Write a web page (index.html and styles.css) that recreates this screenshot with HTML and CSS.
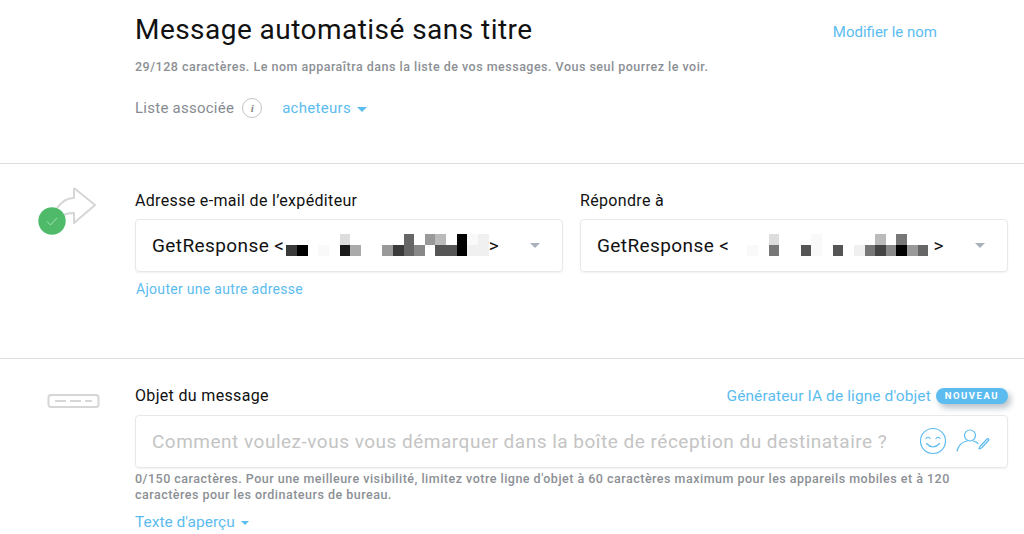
FILE: index.html
```html
<!DOCTYPE html>
<html lang="fr">
<head>
    <meta charset="UTF-8">
    <meta name="viewport" content="width=device-width, initial-scale=1.0">
    <title>Message automatisé</title>
    <link rel="stylesheet" href="styles.css">
</head>
<body>
    <section class="head-section">
        <div class="title-row">
            <h1>Message automatisé sans titre</h1>
            <a class="link rename" href="#">Modifier le nom</a>
        </div>
        <p class="hint name-hint">29/128 caractères. Le nom apparaîtra dans la liste de vos messages. Vous seul pourrez le voir.</p>
        <div class="list-row">
            <span class="list-label">Liste associée</span>
            <span class="info-badge">i</span>
            <a class="link list-link" href="#">acheteurs<span class="caret"></span></a>
        </div>
    </section>

    <section class="sender-section">
        <div class="side-icon">
            <svg class="send-icon" width="70" height="60" viewBox="0 0 70 60">
                <path d="M38 3 L59 20 L38 38 V28 C33 28 30 28 26 31 M21 23 C26 16 32 13 38 13 V3" fill="none" stroke="#d6d6d6" stroke-width="2" stroke-linejoin="round"/>
                <circle cx="16" cy="36" r="13.7" fill="#4fbb6a"/>
                <path d="M11 36.5 L14.5 40 L21 33" fill="none" stroke="#a6e0b4" stroke-width="1"/>
            </svg>
        </div>
        <div class="field-cols">
            <div class="field-col">
                <label class="field-label">Adresse e-mail de l’expéditeur</label>
                <div class="select-box">
                    <span class="select-text">GetResponse &lt;</span>
                    <div class="mosaic mosaic-a">
                        <i></i><i></i><i></i><i></i><i></i><i class="g-d"></i><i></i><i></i><i></i><i></i><i></i><i class="g-6"></i><i></i><i class="g-9"></i><i class="g-b"></i><i></i><i class="g-0"></i><i class="g-f"></i><i class="g-e"></i>
                        <i class="g-3"></i><i class="g-0"></i><i></i><i class="g-f"></i><i></i><i class="g-1"></i><i class="g-a"></i><i></i><i></i><i class="g-9"></i><i class="g-3"></i><i class="g-6"></i><i class="g-8"></i><i></i><i class="g-5"></i><i class="g-5"></i><i class="g-0"></i><i class="g-e"></i><i class="g-e"></i>
                    </div>
                    <span class="select-text">&gt;</span>
                    <span class="select-caret"></span>
                </div>
                <a class="link add-address" href="#">Ajouter une autre adresse</a>
            </div>
            <div class="field-col">
                <label class="field-label">Répondre à</label>
                <div class="select-box">
                    <span class="select-text">GetResponse &lt;</span>
                    <div class="mosaic mosaic-b">
                        <i></i><i></i><i class="g-d"></i><i></i><i></i><i></i><i class="g-f"></i><i></i><i></i><i></i><i></i><i></i><i class="g-b"></i><i></i><i class="g-7"></i><i></i><i></i>
                        <i class="g-f"></i><i></i><i class="g-7"></i><i></i><i></i><i class="g-5"></i><i class="g-f"></i><i></i><i class="g-5"></i><i></i><i class="g-e"></i><i class="g-7"></i><i class="g-4"></i><i class="g-8"></i><i class="g-0"></i><i class="g-9"></i><i class="g-6"></i>
                    </div>
                    <span class="select-text">&gt;</span>
                    <span class="select-caret"></span>
                </div>
            </div>
        </div>
    </section>

    <section class="subject-section">
        <div class="side-icon">
            <svg width="54" height="18" viewBox="0 0 54 18">
                <rect x="1.5" y="2" width="50" height="12" rx="2.5" fill="#fff" stroke="#d6d6d6" stroke-width="2"/>
                <path d="M8 8 H19 M23 8 H34 M38 8 H45" stroke="#d6d6d6" stroke-width="2"/>
            </svg>
        </div>
        <div class="subject-main">
            <div class="subject-top">
                <label class="field-label">Objet du message</label>
                <div class="generator">
                    <a class="link" href="#">Générateur IA de ligne d'objet</a>
                    <span class="new-badge">NOUVEAU</span>
                </div>
            </div>
            <div class="subject-input">
                <span class="placeholder">Comment voulez-vous vous démarquer dans la boîte de réception du destinataire ?</span>
                <svg width="28" height="28" viewBox="0 0 28 28" fill="none" stroke="#5cbcf0" stroke-width="1.2" stroke-linecap="round">
                    <circle cx="14" cy="14" r="12.5"/>
                    <path d="M7 11.5 Q9 9 11 11.5 M17 11.5 Q19 9 21 11.5 M7.5 16.5 Q14 23.5 20.5 16.5"/>
                </svg>
                <svg width="34" height="26" viewBox="0 0 34 26" fill="none" stroke="#5cbcf0" stroke-width="1.2" stroke-linecap="round" stroke-linejoin="round">
                    <circle cx="14" cy="7.5" r="5.5"/>
                    <path d="M1 23 C3 16 8 13.5 11 13 M17.5 13 C19.5 13.5 21 14.5 22 15.5"/>
                    <path d="M24 18.5 L31 11 C32 10 33.5 11.5 32.5 12.5 L25.5 20 L23 21 Z"/>
                </svg>
            </div>
            <p class="hint subject-hint">0/150 caractères. Pour une meilleure visibilité, limitez votre ligne d'objet à 60 caractères maximum pour les appareils mobiles et à 120 caractères pour les ordinateurs de bureau.</p>
            <a class="link preview-link" href="#">Texte d'aperçu<span class="caret"></span></a>
        </div>
    </section>
</body>
</html>
```

FILE: styles.css
```css
* {
    box-sizing: border-box;
}

html, body {
    height: 534px;
    overflow: hidden;
}

body {
    margin: 0;
    background-color: #fff;
    color: #111;
    font-family: Roboto, "Liberation Sans", sans-serif;
}

.link {
    color: #5cbcf0;
    text-decoration: none;
    font-size: 15px;
}

.hint {
    margin: 0;
    color: #8c9095;
    font-size: 12.5px;
    font-weight: 500;
    letter-spacing: 0.49px;
    line-height: 16px;
}

.caret {
    display: inline-block;
    margin-left: 6px;
    vertical-align: middle;
    border-top: 4px solid #5cbcf0;
    border-left: 4px solid transparent;
    border-right: 4px solid transparent;
}

/* top block */
.head-section {
    height: 164px;
    padding: 13px 87px 0 135px;
    border-bottom: 1px solid #dedede;
}

.title-row {
    display: flex;
    justify-content: space-between;
    align-items: center;
}

h1 {
    margin: 0;
    font-size: 28px;
    font-weight: 400;
    line-height: 34px;
    letter-spacing: 0.46px;
}

.rename {
    margin-top: 4px;
}

.name-hint {
    margin-top: 12px;
}

.list-row {
    display: flex;
    align-items: center;
    margin-top: 23px;
}

.list-label {
    color: #868b92;
    font-size: 15px;
    letter-spacing: 0.25px;
}

.info-badge {
    display: flex;
    align-items: center;
    justify-content: center;
    width: 20px;
    height: 20px;
    margin-left: 8px;
    border: 1px solid #c4c4c4;
    border-radius: 50%;
    color: #888;
    font-family: "Liberation Serif", serif;
    font-size: 11px;
    font-style: italic;
    font-weight: bold;
}

.list-link {
    margin-left: 20px;
    font-size: 15px;
    letter-spacing: 0.3px;
}

.list-link .caret {
    border-top-width: 5px;
    border-left-width: 5px;
    border-right-width: 5px;
}

/* sender block */
.sender-section, .subject-section {
    display: flex;
    padding-right: 16px;
}

.sender-section {
    height: 195px;
    padding-top: 27px;
    border-bottom: 1px solid #dedede;
}

.subject-section {
    padding-top: 27px;
}

.side-icon {
    flex: 0 0 135px;
    padding-left: 47px;
}

.sender-section .side-icon {
    padding-left: 36px;
    margin-top: -6px;
}

.subject-section .side-icon {
    padding-top: 7px;
}

.field-cols {
    display: grid;
    flex: 1;
    grid-template-columns: 428px 428px;
    column-gap: 17px;
}

.field-label {
    display: block;
    font-size: 16px;
    letter-spacing: 0.33px;
    line-height: 20px;
}

.select-box {
    display: flex;
    align-items: center;
    height: 53px;
    margin-top: 8px;
    padding: 0 0 1px 16px;
    border: 1px solid #e8e8e8;
    border-radius: 4px;
    box-shadow: 0 1px 2px rgba(0, 0, 0, 0.06);
}

.select-text {
    font-size: 19px;
    letter-spacing: 0.4px;
}

.mosaic {
    display: grid;
    grid-template-rows: 10.67px 10.67px;
    grid-auto-flow: row;
    margin-left: 2px;
}

.mosaic-a {
    grid-template-columns: repeat(19, 10.67px);
}

.mosaic-b {
    grid-template-columns: repeat(17, 10.67px);
    margin-left: 18px;
    margin-right: 5px;
}

.select-caret {
    margin-left: auto;
    margin-right: 22px;
    border-top: 5px solid #a9b1ba;
    border-left: 5px solid transparent;
    border-right: 5px solid transparent;
}

.g-0 { background-color: #000; }
.g-1 { background-color: #1a1a1a; }
.g-3 { background-color: #3a3a3a; }
.g-4 { background-color: #444; }
.g-5 { background-color: #555; }
.g-6 { background-color: #666; }
.g-7 { background-color: #777; }
.g-8 { background-color: #888; }
.g-9 { background-color: #999; }
.g-a { background-color: #aaa; }
.g-b { background-color: #bbb; }
.g-d { background-color: #ddd; }
.g-e { background-color: #f0f0f0; }
.g-f { background-color: #f9f9f9; }

.add-address {
    display: block;
    margin: 9px 0 0 1px;
    font-size: 14px;
    letter-spacing: 0.3px;
}

/* subject block */
.subject-main {
    flex: 1;
}

.subject-top {
    display: flex;
    justify-content: space-between;
    align-items: center;
}

.generator {
    display: flex;
    align-items: center;
    gap: 5px;
}

.generator .link {
    font-size: 15.5px;
    letter-spacing: 0.1px;
}

.new-badge {
    padding: 0 9px;
    border-radius: 9px;
    background-color: #5cbcf0;
    box-shadow: 3px 4px 6px rgba(80, 100, 120, 0.4);
    color: #fff;
    font-size: 9.5px;
    font-weight: 700;
    letter-spacing: 1.5px;
    line-height: 16px;
}

.subject-input {
    display: flex;
    align-items: center;
    height: 53px;
    margin-top: 9px;
    padding: 0 17px 1px 16px;
    border: 1px solid #e8e8e8;
    border-radius: 4px;
    box-shadow: 0 1px 2px rgba(0, 0, 0, 0.06);
}

.placeholder {
    flex: 1;
    color: #c4c4c4;
    font-size: 19px;
    letter-spacing: 0.5px;
    white-space: nowrap;
}

.subject-input svg + svg {
    margin-left: 9px;
}

.subject-hint {
    margin-top: 3px;
    width: 825px;
}

.preview-link {
    display: block;
    margin-top: 10px;
    font-size: 15.5px;
}
```
